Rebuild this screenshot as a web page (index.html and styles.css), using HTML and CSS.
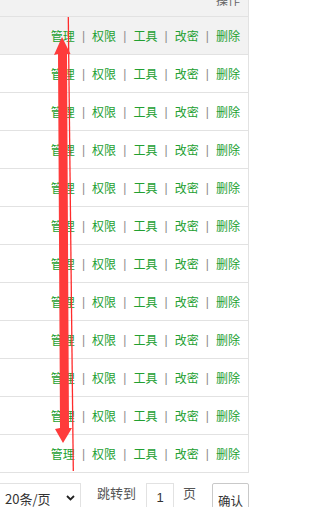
FILE: index.html
```html
<!DOCTYPE html>
<html lang="zh-CN">
<head>
<meta charset="utf-8">
<title>表格操作</title>
<link rel="stylesheet" href="styles.css">
</head>
<body>
<div class="page">
  <div class="table">
    <div class="thead"><span class="th">操作</span></div>
    <div class="row hover"><div class="ops"><a class="op">管理</a><span class="sep">|</span><a class="op">权限</a><span class="sep">|</span><a class="op">工具</a><span class="sep">|</span><a class="op">改密</a><span class="sep">|</span><a class="op">删除</a></div></div>
    <div class="row"><div class="ops"><a class="op">管理</a><span class="sep">|</span><a class="op">权限</a><span class="sep">|</span><a class="op">工具</a><span class="sep">|</span><a class="op">改密</a><span class="sep">|</span><a class="op">删除</a></div></div>
    <div class="row"><div class="ops"><a class="op">管理</a><span class="sep">|</span><a class="op">权限</a><span class="sep">|</span><a class="op">工具</a><span class="sep">|</span><a class="op">改密</a><span class="sep">|</span><a class="op">删除</a></div></div>
    <div class="row"><div class="ops"><a class="op">管理</a><span class="sep">|</span><a class="op">权限</a><span class="sep">|</span><a class="op">工具</a><span class="sep">|</span><a class="op">改密</a><span class="sep">|</span><a class="op">删除</a></div></div>
    <div class="row"><div class="ops"><a class="op">管理</a><span class="sep">|</span><a class="op">权限</a><span class="sep">|</span><a class="op">工具</a><span class="sep">|</span><a class="op">改密</a><span class="sep">|</span><a class="op">删除</a></div></div>
    <div class="row"><div class="ops"><a class="op">管理</a><span class="sep">|</span><a class="op">权限</a><span class="sep">|</span><a class="op">工具</a><span class="sep">|</span><a class="op">改密</a><span class="sep">|</span><a class="op">删除</a></div></div>
    <div class="row"><div class="ops"><a class="op">管理</a><span class="sep">|</span><a class="op">权限</a><span class="sep">|</span><a class="op">工具</a><span class="sep">|</span><a class="op">改密</a><span class="sep">|</span><a class="op">删除</a></div></div>
    <div class="row"><div class="ops"><a class="op">管理</a><span class="sep">|</span><a class="op">权限</a><span class="sep">|</span><a class="op">工具</a><span class="sep">|</span><a class="op">改密</a><span class="sep">|</span><a class="op">删除</a></div></div>
    <div class="row"><div class="ops"><a class="op">管理</a><span class="sep">|</span><a class="op">权限</a><span class="sep">|</span><a class="op">工具</a><span class="sep">|</span><a class="op">改密</a><span class="sep">|</span><a class="op">删除</a></div></div>
    <div class="row"><div class="ops"><a class="op">管理</a><span class="sep">|</span><a class="op">权限</a><span class="sep">|</span><a class="op">工具</a><span class="sep">|</span><a class="op">改密</a><span class="sep">|</span><a class="op">删除</a></div></div>
    <div class="row"><div class="ops"><a class="op">管理</a><span class="sep">|</span><a class="op">权限</a><span class="sep">|</span><a class="op">工具</a><span class="sep">|</span><a class="op">改密</a><span class="sep">|</span><a class="op">删除</a></div></div>
    <div class="row"><div class="ops"><a class="op">管理</a><span class="sep">|</span><a class="op">权限</a><span class="sep">|</span><a class="op">工具</a><span class="sep">|</span><a class="op">改密</a><span class="sep">|</span><a class="op">删除</a></div></div>
  </div>
  <div class="pager">
    <div class="limit"><span>20条/页</span><svg class="chev" width="9" height="6" viewBox="0 0 9 6"><path d="M1 1 L4.5 4.5 L8 1" fill="none" stroke="#222" stroke-width="1.8"/></svg></div>
    <span class="skip-label">跳转到</span>
    <div class="skip-input">1</div>
    <span class="skip-unit">页</span>
    <div class="skip-btn">确认</div>
  </div>
  <svg class="annot" width="264" height="507" viewBox="0 0 264 507">
    <line x1="68.3" y1="17" x2="73.3" y2="471" stroke="#ff2b2b" stroke-width="1.3"/>
    <polygon points="62,37 70.5,54 67,54 69,428 72,428 63,443 55,429 60,428 58,54 54,55" fill="#fe3b3b"/>
  </svg>
</div>
</body>
</html>
```

FILE: styles.css
```css
html, body {
  margin: 0;
  padding: 0;
  background: #fff;
}
body {
  width: 264px;
  height: 507px;
  overflow: hidden;
  font-family: "Noto Sans CJK SC", "Liberation Sans", sans-serif;
}
.page {
  position: relative;
  width: 264px;
  height: 507px;
  overflow: hidden;
}
.table {
  width: 248px;
  border-right: 1px solid #e2e2e2;
  margin-top: -16px;
}
.thead {
  height: 32px;
  background: #f2f2f2;
  border-bottom: 1px solid #e2e2e2;
  display: flex;
  align-items: center;
  justify-content: flex-end;
  padding-right: 8px;
}
.th {
  font-size: 12px;
  color: #666;
  line-height: 12px;
}
.row {
  height: 37px;
  border-bottom: 1px solid #e2e2e2;
  display: flex;
  align-items: center;
  justify-content: flex-end;
  padding-right: 8px;
}
.row.hover {
  background: #f2f2f2;
}
.ops {
  display: flex;
  align-items: center;
  font-size: 12px;
  line-height: 14px;
}
.op {
  color: #22a031;
  width: 24px;
  text-align: center;
  white-space: nowrap;
}
.sep {
  width: 17.3px;
  text-align: center;
  color: #8c8c8c;
  font-family: "Liberation Sans", sans-serif;
}
.pager {
  display: flex;
  align-items: flex-start;
  margin-top: 10px;
  color: #555;
  font-size: 13px;
}
.limit {
  box-sizing: border-box;
  width: 91px;
  height: 28px;
  margin-left: -10px;
  border: 1px solid #e2e2e2;
  display: flex;
  align-items: center;
  padding: 2px 5px 0 14px;
  color: #333;
  justify-content: space-between;
  background: #fff;
}
.chev {
  display: block;
}
.skip-label {
  margin-left: 16px;
  line-height: 20px;
}
.skip-input {
  box-sizing: border-box;
  width: 28px;
  height: 28px;
  margin-left: 10px;
  border: 1px solid #e2e2e2;
  text-align: center;
  line-height: 28px;
  color: #333;
  font-family: "Liberation Sans", sans-serif;
  font-size: 13px;
}
.skip-unit {
  margin-left: 9px;
  line-height: 20px;
}
.skip-btn {
  box-sizing: border-box;
  width: 37px;
  height: 30px;
  margin-left: 16px;
  border: 1px solid #c9c9c9;
  border-radius: 2px;
  text-align: center;
  line-height: 34px;
  color: #333;
  font-size: 12.5px;
}
.annot {
  position: absolute;
  left: 0;
  top: 0;
  pointer-events: none;
}
```
